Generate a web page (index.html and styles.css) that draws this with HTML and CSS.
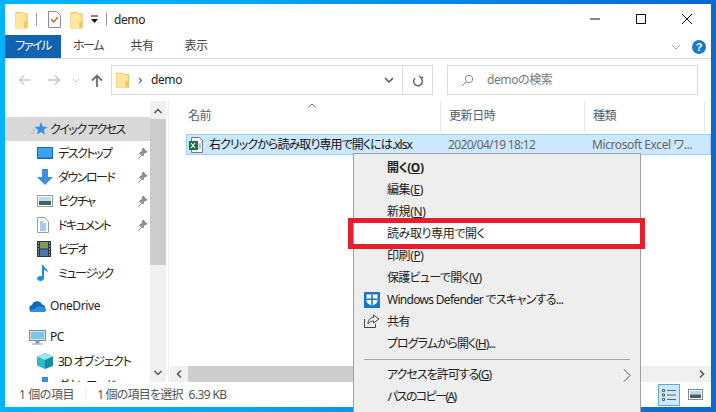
FILE: index.html
```html
<!DOCTYPE html>
<html lang="ja">
<head>
<meta charset="utf-8">
<title>demo</title>
<link rel="stylesheet" href="styles.css">
</head>
<body>
<svg class="defs" width="0" height="0">
  <defs>
    <g id="folder"><path d="M.5 1.500h7l1.500 1.500h3.500v15H.5z" fill="#ffe08a" stroke="#e6c268"/><path d="M.5 3h9v15h-9z" fill="#ffe79f"/><path d="M9.500 11h3v7h-3z" fill="#f2c95c"/></g>
    <g id="pin"><path d="M5 9 2 12M4 5l4 4M7 1l4 4-3 1-1.500 3L3.500 6 6 4.500z" fill="#8e8e8e" stroke="#8e8e8e"/></g>
  </defs>
</svg>
<div class="window">
  <header class="titlebar">
    <svg class="qa-folder" width="13" height="18" viewBox="0 0 13 19"><use href="#folder"/></svg>
    <i class="sep"></i>
    <svg class="qa-check" width="13" height="17" viewBox="0 0 13 17"><path d="M.5.500h8l4 4v12H.5z" fill="#fff" stroke="#8b8b8b"/><path d="M3 8l2.500 3L10 6" fill="none" stroke="#e0532d" stroke-width="1.300"/></svg>
    <svg class="qa-folder2" width="13" height="18" viewBox="0 0 13 19"><use href="#folder"/></svg>
    <svg class="qa-drop" width="9" height="9" viewBox="0 0 9 9"><path d="M1 1h7" stroke="#111"/><path d="M1 4h7L4.500 8z" fill="#111"/></svg>
    <i class="sep sep2"></i>
    <span class="title-text">demo</span>
    <div class="caption">
      <svg width="12" height="12" viewBox="0 0 12 12"><path d="M1 6h10" stroke="#111"/></svg>
      <svg width="12" height="12" viewBox="0 0 12 12"><rect x="1.500" y="1.500" width="9" height="9" fill="none" stroke="#111"/></svg>
      <svg width="12" height="12" viewBox="0 0 12 12"><path d="M1 1l10 10M11 1L1 11" stroke="#111"/></svg>
    </div>
  </header>
  <nav class="ribbon">
    <span class="tab tab-file">ファイル</span>
    <span class="tab tab-kana">ホーム</span>
    <span class="tab">共有</span>
    <span class="tab">表示</span>
    <div class="ribbon-right">
      <svg width="10" height="6" viewBox="0 0 10 6"><path d="M1 1l4 4 4-4" fill="none" stroke="#a8a8a8"/></svg>
      <span class="help">?</span>
    </div>
  </nav>
  <div class="addressrow">
    <div class="navbtns">
      <svg width="14" height="12" viewBox="0 0 14 12"><path d="M13 6H2M6 1.500 1.500 6 6 10.500" fill="none" stroke="#c9c9c9" stroke-width="1.500"/></svg>
      <svg width="14" height="12" viewBox="0 0 14 12"><path d="M1 6h11M8 1.500 12.500 6 8 10.500" fill="none" stroke="#c9c9c9" stroke-width="1.500"/></svg>
      <svg width="8" height="5" viewBox="0 0 8 5"><path d="M1 1l3 3 3-3" fill="none" stroke="#c9c9c9"/></svg>
      <svg width="12" height="13" viewBox="0 0 12 13"><path d="M6 13V2M1 6.500 6 1.500l5 5" fill="none" stroke="#6d6d6d" stroke-width="1.800"/></svg>
    </div>
    <div class="address">
      <svg class="addr-folder" width="13" height="16" viewBox="0 0 13 19" preserveAspectRatio="none"><use href="#folder"/></svg>
      <svg class="addr-chev" width="5" height="7" viewBox="0 0 5 7"><path d="M1 1l2.500 2.500L1 6" fill="none" stroke="#707070" stroke-width="1.200"/></svg>
      <span class="addr-text">demo</span>
      <svg class="addr-down" width="10" height="6" viewBox="0 0 10 6"><path d="M1 1l4 4 4-4" fill="none" stroke="#555" stroke-width="1.500"/></svg>
      <span class="addr-refresh"><svg width="12" height="13" viewBox="0 0 12 13"><path d="M3 2.500h3.500V.5M6.500 3A4.300 4.300 0 1 1 2 7" fill="none" stroke="#666" stroke-width="1.400" transform="rotate(45 6 7)"/></svg></span>
    </div>
    <div class="search">
      <svg width="13" height="13" viewBox="0 0 13 13"><circle cx="8" cy="5" r="3.700" fill="none" stroke="#8a8a8a"/><path d="M5.300 7.700 1 12" stroke="#8a8a8a"/></svg>
      <span>demoの検索</span>
    </div>
  </div>
  <main class="body">
    <aside class="navpane">
      <ul class="tree">
        <li class="quick"><svg width="17" height="16" viewBox="0 0 17 16"><path d="M10 1l1.700 4.600 4.800.3-3.700 3 1.300 4.700L10 11l-4 2.600 1.200-4.700-3.700-3 4.800-.3z" fill="#3b8ee0"/><path d="M1 9h4M0 12h4" stroke="#9cc4ec"/></svg><span>クイック アクセス</span></li>
        <li><svg width="16" height="13" viewBox="0 0 16 13"><rect width="16" height="12" fill="#0f6cbd"/><rect x="1" y="1" width="14" height="9.500" fill="#39a5f2"/></svg><span>デスクトップ</span><svg class="pin" width="12" height="12" viewBox="0 0 12 12"><use href="#pin"/></svg></li>
        <li><svg width="16" height="16" viewBox="0 0 16 16"><path d="M5 0h6v8h5l-8 8-8-8h5z" fill="#3d8fdc"/></svg><span>ダウンロード</span><svg class="pin" width="12" height="12" viewBox="0 0 12 12"><use href="#pin"/></svg></li>
        <li><svg width="16" height="12" viewBox="0 0 16 12"><rect x=".5" y=".5" width="15" height="11" fill="#fff" stroke="#9a9a9a"/><rect x="2" y="2" width="12" height="4" fill="#bfdcec"/><rect x="2" y="6" width="12" height="4" fill="#3f6470"/></svg><span>ピクチャ</span><svg class="pin" width="12" height="12" viewBox="0 0 12 12"><use href="#pin"/></svg></li>
        <li><svg width="12" height="16" viewBox="0 0 12 16"><path d="M.5.500h7l4 4v11H.5z" fill="#fff" stroke="#9a9a9a"/><path d="M3 5h3M3 7h6M3 9h6M3 11h6M3 13h6" stroke="#4d9bd8"/></svg><span>ドキュメント</span><svg class="pin" width="12" height="12" viewBox="0 0 12 12"><use href="#pin"/></svg></li>
        <li><svg width="14" height="16" viewBox="0 0 14 16"><rect width="14" height="16" fill="#33373d"/><rect x="3" y="1" width="8" height="6.500" fill="#7f9a5d"/><rect x="3" y="8.500" width="8" height="6.500" fill="#4a78b5"/><path d="M1 2h1M1 5h1M1 8h1M1 11h1M1 14h1M12 2h1M12 5h1M12 8h1M12 11h1M12 14h1" stroke="#ddd"/></svg><span>ビデオ</span></li>
        <li><svg width="13" height="16" viewBox="0 0 13 16"><path d="M5 0h1.500c.3 3 4.500 3.500 4.500 8-1-2-3-3-4-3v8.500C7 15 5.500 16 3.500 16S0 15 0 13.500 1.500 11 3.500 11c.6 0 1 .1 1.500.3z" fill="#1b8fe0"/></svg><span>ミュージック</span></li>
        <li class="gap"><svg class="wide" width="17" height="11" viewBox="0 0 17 11"><path d="M3.500 11A3.500 3.500 0 0 1 3 4.100 5.300 5.300 0 0 1 13 3.600 3.800 3.800 0 0 1 13.500 11z" fill="#0f6cbd"/><path d="M1 11h15a3 3 0 0 0-3-5l-3-1-5 3-3 .5z" fill="#2b8fe0"/></svg><span>OneDrive</span></li>
        <li class="gap2"><svg class="wide" width="17" height="15" viewBox="0 0 17 15"><rect x=".5" y=".5" width="16" height="10" fill="#cfe8f8" stroke="#7c8a96"/><rect x="2" y="2" width="13" height="7" fill="#7cc3ec"/><path d="M7 11h3v2H7zM3 14h11" fill="#8a97a3" stroke="#8a97a3"/></svg><span>PC</span></li>
        <li class="obj"><svg width="16" height="16" viewBox="0 0 16 16"><path d="M8 0l8 3.500v9L8 16 0 12.500v-9z" fill="#2fb6c8"/><path d="M8 0l8 3.500L8 7 0 3.500z" fill="#9de3ea"/><path d="M8 7v9l8-3.500v-9z" fill="#138ea3"/></svg><span>3D オブジェクト</span></li>
        <li><svg width="16" height="16" viewBox="0 0 16 16"><path d="M5 0h6v8h5l-8 8-8-8h5z" fill="#3d8fdc"/></svg><span>ダウンロード</span></li>
      </ul>
    </aside>
    <div class="vscroll">
      <svg width="10" height="6" viewBox="0 0 10 6"><path d="M1.500 5 5 1.500 8.500 5" fill="none" stroke="#555" stroke-width="1.500"/></svg>
      <div class="vthumb"></div>
      <svg class="vdown" width="10" height="6" viewBox="0 0 10 6"><path d="M1.500 1 5 4.500 8.500 1" fill="none" stroke="#555" stroke-width="1.500"/></svg>
    </div>
    <section class="list">
      <div class="headers">
        <span class="col col-name">名前<svg class="sort" width="10" height="5" viewBox="0 0 10 5"><path d="M1 4.500 5 1l4 3.500" fill="none" stroke="#777"/></svg></span>
        <span class="col col-date">更新日時</span>
        <span class="col col-type">種類</span>
      </div>
      <div class="filerow">
        <svg width="16" height="16" viewBox="0 0 16 16"><path d="M3.500.5h8l3 3v12h-11z" fill="#fff" stroke="#777"/><rect x="1" y="4" width="9" height="9" fill="#1d7044"/><path d="M3 6l4 5M7 6l-4 5" stroke="#fff" stroke-width="1.200"/><path d="M11 7h2M11 9h2M11 11h2" stroke="#4aa36f"/></svg>
        <span class="f-name">右クリックから読み取り専用で開くには.xlsx</span>
        <span class="f-date">2020/04/19 18:12</span>
        <span class="f-type">Microsoft Excel ワ...</span>
      </div>
      <div class="hscroll">
        <svg width="6" height="10" viewBox="0 0 6 10"><path d="M5 1.500 1.500 5 5 8.500" fill="none" stroke="#555" stroke-width="1.500"/></svg>
        <div class="hthumb"></div>
        <svg class="hright" width="6" height="10" viewBox="0 0 6 10"><path d="M1 1.500 4.500 5 1 8.500" fill="none" stroke="#555" stroke-width="1.500"/></svg>
      </div>
    </section>
  </main>
  <footer class="status">
    <span class="st1">1 個の項目</span>
    <i class="st-sep"></i>
    <span class="st2">1 個の項目を選択</span>
    <span class="st3">6.39 KB</span>
    <div class="views">
      <span class="view view-on"><svg width="16" height="14" viewBox="0 0 16 14"><path d="M1.500 1.500h2v2h-2zM1.500 6h2v2h-2zM1.500 10.500h2v2h-2z" fill="#fff" stroke="#555"/><path d="M6 2.500h9M6 7h9M6 11.500h9" stroke="#666"/></svg></span>
      <span class="view"><svg width="15" height="11" viewBox="0 0 15 11"><rect x=".5" y=".5" width="14" height="10" fill="#fff" stroke="#888"/><rect x="2" y="2" width="11" height="3.500" fill="#bcd8e8"/><rect x="2" y="5.500" width="11" height="3.500" fill="#3d5f6b"/></svg></span>
    </div>
  </footer>
</div>
<div class="menu">
  <div class="mi strong">開く(<u>O</u>)</div>
  <div class="mi">編集(<u>E</u>)</div>
  <div class="mi">新規(<u>N</u>)</div>
  <div class="mi mi-hot">読み取り専用で開く</div>
  <div class="mi">印刷(<u>P</u>)</div>
  <div class="mi mi-tight">保護ビューで開く(<u>V</u>)</div>
  <div class="mi mi-tight"><svg class="mi-ic" width="16" height="16" viewBox="0 0 16 16"><path d="M0 0h16v16H0z" fill="#1777c9"/><path d="M2.500 2.500h11v6c0 2.500-2.500 4-5.500 5.500-3-1.500-5.500-3-5.500-5.500z" fill="#fff"/><path d="M7.200 2.500h1.600v11.500H7.200zM2.500 6.500h11v1.600h-11z" fill="#1777c9"/></svg>Windows Defender でスキャンする...</div>
  <div class="mi"><svg class="mi-ic" width="16" height="14" viewBox="0 0 16 14"><path d="M.5 5v8.500h11V10" fill="none" stroke="#444"/><path d="M9.500 1 15 5 9.500 9V7C7 7 5 8 4 10c0-4 2-6.500 5.500-6.500z" fill="none" stroke="#444"/></svg>共有</div>
  <div class="mi mi-tighter">プログラムから開く(<u>H</u>)...</div>
  <hr class="msep">
  <div class="mi mi-tighter">アクセスを許可する(<u>G</u>)<svg class="mi-arrow" width="8" height="13" viewBox="0 0 8 13"><path d="M1 .5l6 6-6 6" fill="none" stroke="#555"/></svg></div>
  <div class="mi mi-tightest">パスのコピー(<u>A</u>)</div>
  <div class="mi">以前のバージョンの復元(<u>V</u>)</div>
</div>
<div class="highlight"></div>
</body>
</html>
```
FILE: styles.css
```css
* { box-sizing: border-box; margin: 0; padding: 0; }
html, body { width: 716px; height: 412px; overflow: hidden; }
body {
  position: relative;
  padding: 4px 5px 5px 5px;
  background: linear-gradient(90deg, #00b4ff 0%, #00a6f4 35%, #0a7fe0 70%, #0a68d0 100%);
  font: 12px/16px "Noto Sans", "Noto Sans CJK JP", sans-serif;
  font-feature-settings: "palt";
  letter-spacing: -0.4px;
  color: #1a1a1a;
}
.defs { position: absolute; }
.window { width: 706px; height: 403px; background: #fff; display: flex; flex-direction: column; }

.titlebar { height: 31px; display: flex; align-items: center; flex: none; padding-left: 10px; }
.sep { width: 1px; height: 13px; background: #9a9a9a; margin-left: 8px; }
.qa-check { margin-left: 11px; }
.qa-folder2 { margin-left: 9px; }
.qa-drop { margin-left: 7px; }
.sep2 { margin-left: 7px; }
.title-text { margin-left: 7px; color: #222; }
.caption { margin-left: auto; display: flex; gap: 34px; padding-right: 18px; transform: translateY(-1px); }

.ribbon { height: 24px; display: flex; align-items: center; flex: none; border-bottom: 1px solid #dadada; }
.tab { width: 54px; text-align: center; color: #444; height: 23px; line-height: 22px; }
.tab-file { width: 56px; background: #0f63b0; color: #fff; letter-spacing: -1.5px; }
.tab-kana { letter-spacing: -1.5px; }
.ribbon-right { margin-left: auto; display: flex; align-items: center; gap: 11px; padding-right: 5px; }
.help { width: 14px; height: 14px; border-radius: 50%; background: #1a78d2; color: #fff; font: bold 11px/14px "Liberation Sans", sans-serif; letter-spacing: 0; text-align: center; }

.addressrow { height: 42px; display: flex; align-items: flex-start; padding-top: 6px; flex: none; }
.navbtns { width: 106px; height: 30px; display: flex; align-items: center; padding-left: 13px; }
.navbtns svg:nth-child(2) { margin-left: 15px; }
.navbtns svg:nth-child(3) { margin-left: 11px; }
.navbtns svg:nth-child(4) { margin-left: 11px; }
.address { width: 322px; height: 30px; border: 1px solid #d9d9d9; display: flex; align-items: center; padding-left: 4px; }
.addr-chev { margin-left: 9px; }
.addr-text { margin-left: 8px; color: #222; }
.addr-down { margin-left: auto; margin-right: 8px; }
.addr-refresh { width: 30px; height: 28px; border-left: 1px solid #d9d9d9; display: flex; align-items: center; justify-content: center; }
.search { width: 251px; height: 30px; margin-left: 14px; border: 1px solid #d9d9d9; display: flex; align-items: center; padding-left: 13px; gap: 13px; color: #777; }

.body { flex: 1; display: flex; min-height: 0; }
.navpane { width: 145px; flex: none; overflow: hidden; padding-top: 16px; }
.tree { list-style: none; }
.tree li { height: 24px; display: flex; align-items: center; padding-left: 32px; position: relative; }
.tree li span { position: absolute; left: 53px; margin-top: 2px; white-space: nowrap; color: #222; letter-spacing: -1.5px; }
.tree li > svg:first-child { flex: none; }
.tree .quick { background: #d9d9d9; padding-left: 26px; }
.tree .quick span { left: 45px; letter-spacing: -1.5px; }
.tree .gap { margin-top: 9px; padding-left: 24px; }
.tree .gap2 { margin-top: 7px; padding-left: 24px; }
.tree .gap span, .tree .gap2 span { left: 45px; margin-top: 0; letter-spacing: -0.4px; }
.tree .obj span { letter-spacing: -1px; }
.pin { position: absolute; left: 131px; top: 6px; }

.vscroll { width: 16px; background: #f0f0f0; flex: none; position: relative; display: flex; flex-direction: column; align-items: center; padding-top: 7px; }
.vthumb { position: absolute; left: 0; top: 18px; width: 16px; height: 146px; background: #cdcdcd; }
.vdown { margin-top: auto; margin-bottom: 6px; }

.list { flex: 1; margin-left: 2px; border-left: 1px solid #f0f0f0; display: flex; flex-direction: column; position: relative; }
.headers { height: 33px; display: flex; flex: none; color: #4c607a; padding-top: 1px; }
.col { position: relative; height: 30px; line-height: 27px; padding-left: 8px; border-right: 1px solid #e5e5e5; }
.col-name { width: 272px; padding-left: 19px; }
.col-date { width: 144px; }
.col-type { width: 120px; }
.sort { position: absolute; left: 138px; top: 1px; }
.filerow { position: relative; margin-left: 17px; height: 21px; background: #cce8ff; border: 1px solid #99d1ff; display: flex; align-items: center; padding-left: 1px; white-space: nowrap; overflow: hidden; flex: none; }
.f-name { margin-left: 5px; width: 239px; color: #111; letter-spacing: -0.92px; }
.f-date { width: 144px; color: #666; letter-spacing: -0.65px; }
.f-type { color: #666; }
.hscroll { margin-top: auto; height: 16px; background: #f0f0f0; display: flex; align-items: center; padding-left: 6px; position: relative; margin-left: 1px; }
.hthumb { position: absolute; left: 18px; top: 0; height: 16px; width: 280px; background: #cdcdcd; }
.hright { margin-left: auto; margin-right: 6px; }

.status { height: 25px; flex: none; display: flex; align-items: center; color: #555; padding-left: 14px; }
.st-sep { width: 1px; height: 16px; background: #efefef; margin-left: 11px; }
.st2 { margin-left: 11px; letter-spacing: -0.8px; }
.st3 { margin-left: 6px; letter-spacing: -0.6px; }
.views { margin-left: auto; display: flex; gap: 4px; padding-right: 5px; align-items: center; }
.view { width: 22px; height: 22px; display: flex; align-items: center; justify-content: center; }
.view-on { background: #cce8ff; border: 1px solid #5fa8d3; }

.menu { position: absolute; left: 353px; top: 153px; width: 288px; height: 275px; background: #eeeeee; border: 1px solid #a0a0a0; padding-top: 3px; overflow: hidden; }
.mi { height: 22px; line-height: 22px; padding-left: 33px; position: relative; color: #222; white-space: nowrap; }
.mi-tight { letter-spacing: -0.7px; }
.mi-tighter { letter-spacing: -1px; }
.mi-tightest { letter-spacing: -1.6px; }
.mi-hot { background: #fff; }
.strong { font-weight: 700; }
.mi-ic { position: absolute; left: 10px; top: 3px; }
.mi-arrow { position: absolute; left: 269px; top: 5px; }
.msep { border: 0; border-top: 1px solid #a5a5a5; margin: 4px 10px 4px 10px; height: 1px; }
.highlight { position: absolute; left: 348px; top: 218px; width: 297px; height: 31px; border: 5px solid #e81c2a; }
```
